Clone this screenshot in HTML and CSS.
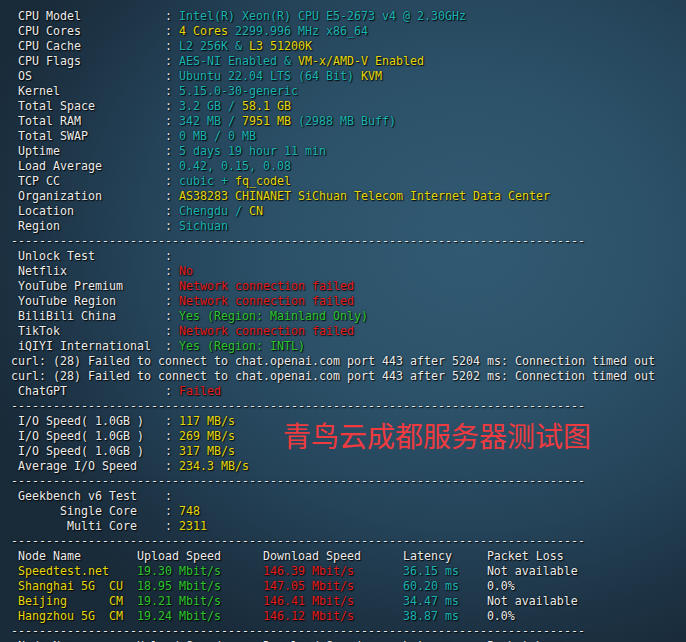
FILE: index.html
```html
<!DOCTYPE html>
<html lang="zh-CN">
<head>
    <meta charset="UTF-8">
    <title>yabs - Chengdu</title>
    <link rel="stylesheet" href="styles.css">
</head>
<body>
    <div class="screen">
        <div class="term">
            <div class="line"><span class="k">CPU Model</span>: <span class="c">Intel(R) Xeon(R) CPU E5-2673 v4 @ 2.30GHz</span></div>
            <div class="line"><span class="k">CPU Cores</span>: <span class="y">4 Cores</span><span class="c"> 2299.996 MHz x86_64</span></div>
            <div class="line"><span class="k">CPU Cache</span>: <span class="c">L2 256K &amp; </span><span class="y">L3 51200K</span></div>
            <div class="line"><span class="k">CPU Flags</span>: <span class="c">AES-NI Enabled &amp; </span><span class="y">VM-x/AMD-V Enabled</span></div>
            <div class="line"><span class="k">OS</span>: <span class="c">Ubuntu 22.04 LTS (64 Bit) </span><span class="y">KVM</span></div>
            <div class="line"><span class="k">Kernel</span>: <span class="c">5.15.0-30-generic</span></div>
            <div class="line"><span class="k">Total Space</span>: <span class="c">3.2 GB / </span><span class="y">58.1 GB</span></div>
            <div class="line"><span class="k">Total RAM</span>: <span class="c">342 MB / </span><span class="y">7951 MB</span><span class="c"> (2988 MB Buff)</span></div>
            <div class="line"><span class="k">Total SWAP</span>: <span class="c">0 MB / 0 MB</span></div>
            <div class="line"><span class="k">Uptime</span>: <span class="c">5 days 19 hour 11 min</span></div>
            <div class="line"><span class="k">Load Average</span>: <span class="c">0.42, 0.15, 0.08</span></div>
            <div class="line"><span class="k">TCP CC</span>: <span class="c">cubic + </span><span class="y">fq_codel</span></div>
            <div class="line"><span class="k">Organization</span>: <span class="y">AS38283 CHINANET SiChuan Telecom Internet Data Center</span></div>
            <div class="line"><span class="k">Location</span>: <span class="c">Chengdu / </span><span class="y">CN</span></div>
            <div class="line"><span class="k">Region</span>: <span class="c">Sichuan</span></div>
            <div class="line">----------------------------------------------------------------------------------</div>

            <div class="line"><span class="k">Unlock Test</span>: </div>
            <div class="line"><span class="k">Netflix</span>: <span class="r">No</span></div>
            <div class="line"><span class="k">YouTube Premium</span>: <span class="r">Network connection failed</span></div>
            <div class="line"><span class="k">YouTube Region</span>: <span class="r">Network connection failed</span></div>
            <div class="line"><span class="k">BiliBili China</span>: <span class="g">Yes (Region: Mainland Only)</span></div>
            <div class="line"><span class="k">TikTok</span>: <span class="r">Network connection failed</span></div>
            <div class="line"><span class="k">iQIYI International</span>: <span class="g">Yes (Region: INTL)</span></div>
            <div class="line">curl: (28) Failed to connect to chat.openai.com port 443 after 5204 ms: Connection timed out</div>
            <div class="line">curl: (28) Failed to connect to chat.openai.com port 443 after 5202 ms: Connection timed out</div>
            <div class="line"><span class="k">ChatGPT</span>: <span class="r">Failed</span></div>
            <div class="line">----------------------------------------------------------------------------------</div>

            <div class="line"><span class="k">I/O Speed( 1.0GB )</span>: <span class="y">117 MB/s</span></div>
            <div class="line"><span class="k">I/O Speed( 1.0GB )</span>: <span class="y">269 MB/s</span></div>
            <div class="line"><span class="k">I/O Speed( 1.0GB )</span>: <span class="y">317 MB/s</span></div>
            <div class="line"><span class="k">Average I/O Speed</span>: <span class="y">234.3 MB/s</span></div>
            <div class="line">----------------------------------------------------------------------------------</div>

            <div class="line"><span class="k">Geekbench v6 Test</span>: </div>
            <div class="line"><span class="k">      Single Core</span>: <span class="y">748</span></div>
            <div class="line"><span class="k">       Multi Core</span>: <span class="y">2311</span></div>
            <div class="line">----------------------------------------------------------------------------------</div>

            <div class="line"><span class="node">Node Name</span><span class="up">Upload Speed</span><span class="down">Download Speed</span><span class="lat">Latency</span>Packet Loss</div>
            <div class="line"><span class="node y">Speedtest.net</span><span class="up g">19.30 Mbit/s</span><span class="down r">146.39 Mbit/s</span><span class="lat c">36.15 ms</span>Not available</div>
            <div class="line"><span class="node y">Shanghai 5G  CU</span><span class="up g">18.95 Mbit/s</span><span class="down r">147.05 Mbit/s</span><span class="lat c">60.20 ms</span>0.0%</div>
            <div class="line"><span class="node y">Beijing      CM</span><span class="up g">19.21 Mbit/s</span><span class="down r">146.41 Mbit/s</span><span class="lat c">34.47 ms</span>Not available</div>
            <div class="line"><span class="node y">Hangzhou 5G  CM</span><span class="up g">19.24 Mbit/s</span><span class="down r">146.12 Mbit/s</span><span class="lat c">38.87 ms</span>0.0%</div>
            <div class="line">----------------------------------------------------------------------------------</div>
            <div class="line"><span class="node">Node Name</span><span class="up">Upload Speed</span><span class="down">Download Speed</span><span class="lat">Latency</span>Packet Loss</div>
        </div>

        <div class="mark">青鸟云成都服务器测试图</div>
    </div>
</body>
</html>
```

FILE: styles.css
```css
html, body {
    margin: 0;
    height: 642px;
    overflow: hidden;
}

body {
    background:
        radial-gradient(ellipse 75% 70% at 68% 38%, #315a72 0%, #2c5269 35%, #25445a 62%, #1c3142 88%, #192a38 100%);
    background-color: #1c2f3f;
    font-family: "DejaVu Sans Mono", monospace;
    font-size: 11.63px;
    line-height: 15px;
    color: #ececec;
}

.screen {
    position: relative;
    height: 642px;
}

.term {
    padding: 9px 0 0 11px;
    text-shadow: 1px 1px 1px rgba(0, 0, 0, 0.85), 0 0 2px rgba(0, 0, 0, 0.6);
}

.line {
    white-space: pre;
    height: 15px;
}

/* label column: 1 space + 21 chars, then ": " */
.k {
    display: inline-block;
    width: 21ch;
    padding-left: 1ch;
}

/* speedtest table columns */
.node {
    display: inline-block;
    width: 17ch;
    padding-left: 1ch;
}

.up {
    display: inline-block;
    width: 18ch;
}

.down {
    display: inline-block;
    width: 20ch;
}

.lat {
    display: inline-block;
    width: 12ch;
}

.c { color: #1cb3b3; }
.y { color: #e6d80c; }
.r { color: #e41d1f; }
.g { color: #2fc52f; }

.mark {
    position: absolute;
    left: 283px;
    top: 421px;
    font-family: "Noto Sans CJK SC", sans-serif;
    font-size: 28px;
    line-height: 28px;
    color: #ef3b3f;
    white-space: nowrap;
}
```
